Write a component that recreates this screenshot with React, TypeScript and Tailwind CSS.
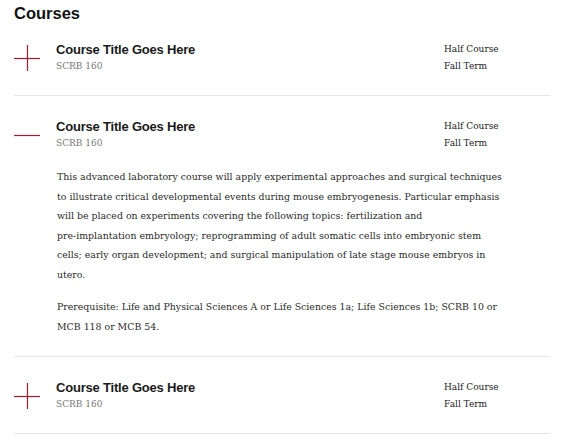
import React from "react";

const serif = { fontFamily: '"DejaVu Serif", serif' };

function PlusIcon({ open }: { open: boolean }) {
  return (
    <svg width="26" height="26" viewBox="0 0 26 26" className="shrink-0">
      <line x1="0" y1="13.5" x2="26" y2="13.5" stroke="#a51c30" strokeWidth="1.2" />
      {!open && <line x1="13.5" y1="0" x2="13.5" y2="26" stroke="#a51c30" strokeWidth="1.2" />}
    </svg>
  );
}

function Row({ open, first, children }: { open: boolean; first?: boolean; children?: React.ReactNode }) {
  return (
    <div className={`border-b border-[#e6e6e6] ${first ? "pt-[18px]" : "pt-[22px]"} pb-[20.5px]`}>
      <div className="flex items-start">
        <div className="flex h-[34px] w-[26px] items-center">
          <PlusIcon open={open} />
        </div>
        <div className="ml-[16px] flex-1">
          <div className="font-['Liberation_Sans',sans-serif] text-[13px] font-bold leading-[17px] tracking-[-0.2px] text-[#1a1a1a]">
            Course Title Goes Here
          </div>
          <div className="text-[9px] leading-[17px] font-light text-[#777]" style={serif}>
            SCRB 160
          </div>
        </div>
        <div className="w-[106px] text-[9px] leading-[17px] text-[#222]" style={serif}>
          <div>Half Course</div>
          <div>Fall Term</div>
        </div>
      </div>
      {children}
    </div>
  );
}

export default function App() {
  return (
    <div className="min-h-[438px] bg-white pl-[14px] pr-[12px]">
      <h2 className="pt-[4px] leading-[18px] mb-[0.5px] font-['Liberation_Sans',sans-serif] text-[16.5px] font-bold text-[#111]">
        Courses
      </h2>
      <Row open={false} first />
      <Row open={true}>
        <div className="ml-[43px] mt-[15px] -mb-[1px] text-[9.4px] leading-[19.6px] text-[#2a2a2a]" style={serif}>
          <p className="whitespace-nowrap">
            This advanced laboratory course will apply experimental approaches and surgical techniques
            <br />
            to illustrate critical developmental events during mouse embryogenesis. Particular emphasis
            <br />
            will be placed on experiments covering the following topics: fertilization and
            <br />
            pre-implantation embryology; reprogramming of adult somatic cells into embryonic stem
            <br />
            cells; early organ development; and surgical manipulation of late stage mouse embryos in
            <br />
            utero.
          </p>
          <p className="mt-[12.5px] whitespace-nowrap">
            Prerequisite: Life and Physical Sciences A or Life Sciences 1a; Life Sciences 1b; SCRB 10 or
            <br />
            MCB 118 or MCB 54.
          </p>
        </div>
      </Row>
      <Row open={false} />
    </div>
  );
}
